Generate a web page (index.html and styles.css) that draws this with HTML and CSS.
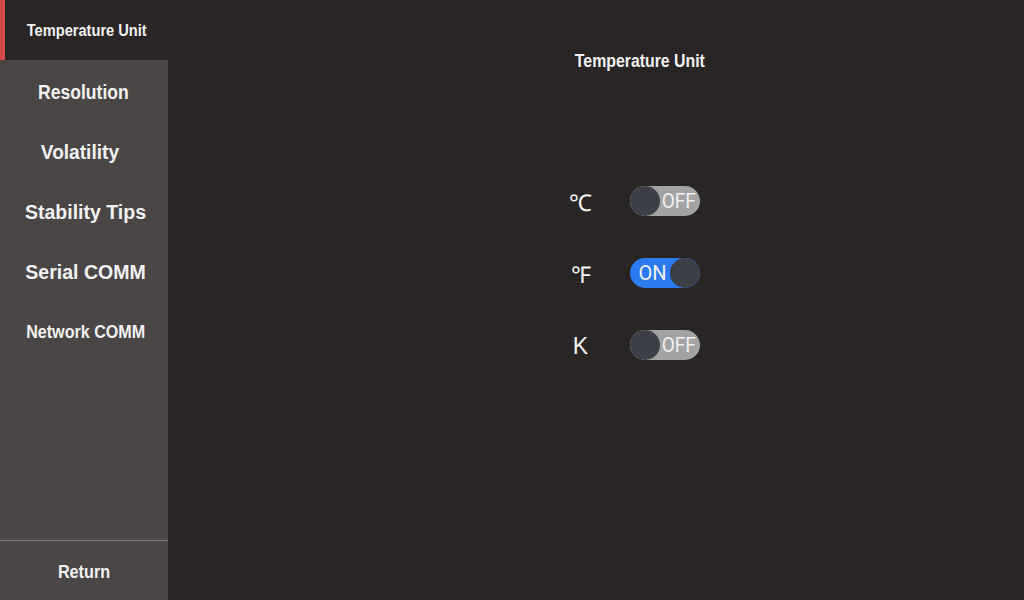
FILE: index.html
```html
<!DOCTYPE html>
<html>
<head>
<meta charset="utf-8">
<link rel="stylesheet" href="styles.css">
</head>
<body>
<div class="app">
  <nav class="sidebar">
    <div class="menu">
      <div class="item active"><span class="lbl narrow">Temperature Unit</span></div>
      <div class="item"><span class="lbl res">Resolution</span></div>
      <div class="item"><span class="lbl vol">Volatility</span></div>
      <div class="item"><span class="lbl">Stability Tips</span></div>
      <div class="item"><span class="lbl">Serial COMM</span></div>
      <div class="item"><span class="lbl narrow2">Network COMM</span></div>
    </div>
    <div class="return"><span class="lbl narrow3">Return</span></div>
  </nav>
  <main class="content">
    <h1 class="title"><span>Temperature Unit</span></h1>
    <div class="rows">
      <div class="row">
        <span class="unit">℃</span>
        <div class="toggle off"><span class="knob"></span><span class="txt">OFF</span></div>
      </div>
      <div class="row">
        <span class="unit">℉</span>
        <div class="toggle on"><span class="txt">ON</span><span class="knob"></span></div>
      </div>
      <div class="row">
        <span class="unit">K</span>
        <div class="toggle off"><span class="knob"></span><span class="txt">OFF</span></div>
      </div>
    </div>
  </main>
</div>
</body>
</html>
```
FILE: styles.css
```css
html, body {
  margin: 0;
  padding: 0;
  background: #292524;
}
body {
  font-family: "Liberation Sans", Arial, sans-serif;
  color: #f2f2f2;
}
.app {
  display: flex;
  width: 1024px;
  height: 600px;
}
.sidebar {
  width: 168px;
  background: #4a4645;
  display: flex;
  flex-direction: column;
  justify-content: space-between;
}
.menu {
  display: flex;
  flex-direction: column;
}
.item {
  height: 60px;
  display: flex;
  align-items: center;
  justify-content: center;
  font-size: 19.5px;
  font-weight: bold;
  box-sizing: border-box;
  padding-left: 3px;
  padding-top: 5px;
}
.item.active {
  background: #2a2626;
  border-left: 5px solid #d24a4a;
  padding-left: 0;
  padding-top: 2px;
}
.lbl {
  display: inline-block;
  white-space: nowrap;
}
.lbl.narrow {
  font-size: 17px;
  transform: scaleX(0.86);
}
.lbl.narrow2 {
  font-size: 17.5px;
  transform: scaleX(0.92);
}
.lbl.narrow3 {
  font-size: 18px;
  transform: scaleX(0.9);
}
.lbl.res {
  transform: scaleX(0.9);
  margin-left: -4px;
}
.lbl.vol {
  transform: scaleX(0.98);
  margin-left: -12px;
}
.return {
  border-top: 1px solid #7c7876;
  display: flex;
  align-items: center;
  justify-content: center;
  font-weight: bold;
  padding-top: 3px;
  box-sizing: border-box;
  height: 60px;
}
.content {
  flex: 1;
  display: flex;
  flex-direction: column;
  align-items: center;
  padding-left: 88px;
}
.title {
  margin: 50px 0 0 0;
  font-size: 18px;
  font-weight: bold;
  line-height: 22px;
}
.title span {
  display: inline-block;
  transform: scaleX(0.88);
}
.rows {
  margin-top: 114px;
  display: flex;
  flex-direction: column;
  gap: 42px;
  margin-left: -12px;
}
.row {
  display: flex;
  align-items: center;
  height: 30px;
}
.unit {
  width: 24px;
  margin-right: 37px;
  text-align: center;
  font-size: 23px;
  font-family: "Liberation Sans", sans-serif;
  color: #f4f4f4;
  box-sizing: border-box;
  padding-top: 2px;
}
.toggle {
  width: 70px;
  height: 30px;
  border-radius: 15px;
  display: flex;
  align-items: center;
  justify-content: space-between;
  box-sizing: border-box;
  font-family: "Roboto", "Liberation Sans", sans-serif;
  font-size: 20px;
  color: #f0f0f0;
  overflow: hidden;
}
.toggle.off {
  background: #a3a3a3;
}
.toggle.on {
  background: #2b7af0;
  padding-left: 9px;
}
.knob {
  width: 30px;
  height: 30px;
  border-radius: 50%;
  background: #3c3f48;
  flex: none;
}
.toggle.off .txt {
  display: inline-block;
  transform: scaleX(0.95);
  transform-origin: right center;
  margin-right: 4px;
}
```
